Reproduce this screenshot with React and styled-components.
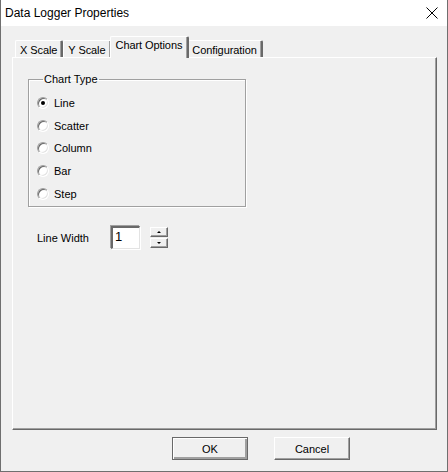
import React from 'react'
import styled, { createGlobalStyle } from 'styled-components'

const Global = createGlobalStyle`
  html, body { margin: 0; padding: 0; background: #fff; }
  body { font-family: "Liberation Sans", Arial, sans-serif; font-size: 11px; color: #000; }
`

const Win = styled.div`
  width: 448px;
  height: 472px;
  box-sizing: border-box;
  border: 1px solid #6f6f6f;
  border-top: none;
  display: flex;
  flex-direction: column;
  background: #f0f0f0;
`

const TitleBar = styled.div`
  height: 26px;
  background: #fff;
  display: flex;
  align-items: center;
  justify-content: space-between;
  padding: 0 8px 0 4px;
  font-family: "Liberation Sans", Arial, sans-serif;
  font-size: 12px;
`

const Close = styled.svg`
  width: 12px;
  height: 12px;
  margin-right: 1px;
`

const Body = styled.div`
  flex: 1;
  display: flex;
  flex-direction: column;
  padding: 10px 10px 0 11px;
`

const TabRow = styled.div`
  display: flex;
  align-items: flex-end;
  height: 21px;
  padding-left: 3px;
  position: relative;
  z-index: 1;
`

const Tab = styled.div`
  box-sizing: border-box;
  height: ${p => (p.$active ? '22px' : '17px')};
  margin: ${p => (p.$active ? '0 -2px -1px -2px' : '0')};
  padding: ${p => (p.$active ? '2px 5px 0 5px' : '1px 4px 0 4px')};
  letter-spacing: -0.08px;
  border-top: 1px solid #fff;
  border-left: 1px solid #fff;
  border-right: 2px solid #696969;
  border-radius: 2px 2px 0 0;
  background: #f0f0f0;
  display: flex;
  align-items: ${p => (p.$active ? 'flex-start' : 'center')};
  white-space: nowrap;
  box-shadow: inset -1px 0 0 #a0a0a0;
  position: relative;
  z-index: ${p => (p.$active ? 2 : 1)};
`

const Panel = styled.div`
  box-sizing: border-box;
  height: 373px;
  border-top: 1px solid #fff;
  border-left: 1px solid #fff;
  border-right: 1px solid #696969;
  border-bottom: 1px solid #696969;
  box-shadow: inset -1px -1px 0 #a0a0a0;
  padding: 15px 0 0 15px;
`

const Group = styled.fieldset`
  box-sizing: border-box;
  width: 218px;
  height: 134px;
  margin: 0;
  padding: 9px 0 0 8px;
  border: 1px solid #a0a0a0;
  box-shadow: 1px 1px 0 #fff, inset 1px 1px 0 #fff;
  display: flex;
  flex-direction: column;
  gap: 6.7px;
  legend {
    padding: 0 1px;
    margin-left: 6px;
    line-height: 13px;
  }
`

const RadioRow = styled.label`
  display: flex;
  align-items: center;
  gap: 5px;
  height: 16px;
`

const Radio = styled.span`
  box-sizing: border-box;
  width: 12px;
  height: 12px;
  border-radius: 50%;
  border: 1px solid;
  border-color: #a0a0a0 #fff #fff #a0a0a0;
  background: #fff;
  box-shadow: inset 1px 1px 0 #696969, inset -1px -1px 0 #e3e3e3;
  display: flex;
  align-items: center;
  justify-content: center;
  &::after {
    content: '';
    width: 4px;
    height: 4px;
    border-radius: 50%;
    background: ${p => (p.$on ? '#000' : 'transparent')};
  }
`

const WidthRow = styled.div`
  display: flex;
  align-items: center;
  margin-top: 19px;
  padding-left: 9px;
`

const Label = styled.span`
  width: 74px;
`

const Field = styled.div`
  box-sizing: border-box;
  width: 29px;
  height: 23px;
  background: #fff;
  border-top: 2px solid #696969;
  border-left: 2px solid #696969;
  border-right: 1px solid #e3e3e3;
  border-bottom: 1px solid #e3e3e3;
  box-shadow: -1px -1px 0 #a0a0a0, 1px 1px 0 #fff;
  padding: 1px 0 0 2px;
  font-size: 13px;
  line-height: 16px;
`

const Spin = styled.div`
  display: flex;
  flex-direction: column;
  gap: 1px;
  margin-left: 10px;
`

const SpinBtn = styled.div`
  box-sizing: border-box;
  width: 18px;
  height: 10px;
  border: 1px solid;
  border-color: #fff #696969 #696969 #fff;
  box-shadow: inset -1px -1px 0 #a0a0a0;
  display: flex;
  align-items: center;
  justify-content: center;
  &::after {
    content: '';
    border-left: 2px solid transparent;
    border-right: 2px solid transparent;
    ${p => (p.$up ? 'border-bottom: 2px solid #000;' : 'border-top: 2px solid #000;')}
  }
`

const Footer = styled.div`
  display: flex;
  gap: 26px;
  padding: 7px 0 0 160px;
`

const Button = styled.button`
  box-sizing: border-box;
  width: 76px;
  height: 23px;
  font-family: "Liberation Sans", Arial, sans-serif;
  font-size: 11px;
  background: #f0f0f0;
  border: 1px solid;
  border-color: ${p => (p.$def ? '#696969' : '#fff #696969 #696969 #fff')};
  box-shadow: ${p =>
    p.$def
      ? 'inset 1px 1px 0 #fff, inset -2px -2px 0 #a0a0a0'
      : 'inset -1px -1px 0 #a0a0a0'};
  padding: 0;
  color: #000;
`

const types = ['Line', 'Scatter', 'Column', 'Bar', 'Step']

export default function App() {
  return (
    <Win>
      <Global />
      <TitleBar>
        <span>Data Logger Properties</span>
        <Close viewBox="0 0 12 12">
          <path d="M0.5 0.5L11.5 11.5M11.5 0.5L0.5 11.5" stroke="#000" strokeWidth="1" fill="none" />
        </Close>
      </TitleBar>
      <Body>
        <TabRow>
          <Tab>X Scale</Tab>
          <Tab>Y Scale</Tab>
          <Tab $active>Chart Options</Tab>
          <Tab>Configuration</Tab>
        </TabRow>
        <Panel>
          <Group>
            <legend>Chart Type</legend>
            {types.map((t, i) => (
              <RadioRow key={t}>
                <Radio $on={i === 0} />
                {t}
              </RadioRow>
            ))}
          </Group>
          <WidthRow>
            <Label>Line Width</Label>
            <Field>1</Field>
            <Spin>
              <SpinBtn $up />
              <SpinBtn />
            </Spin>
          </WidthRow>
        </Panel>
        <Footer>
          <Button $def>OK</Button>
          <Button>Cancel</Button>
        </Footer>
      </Body>
    </Win>
  )
}
